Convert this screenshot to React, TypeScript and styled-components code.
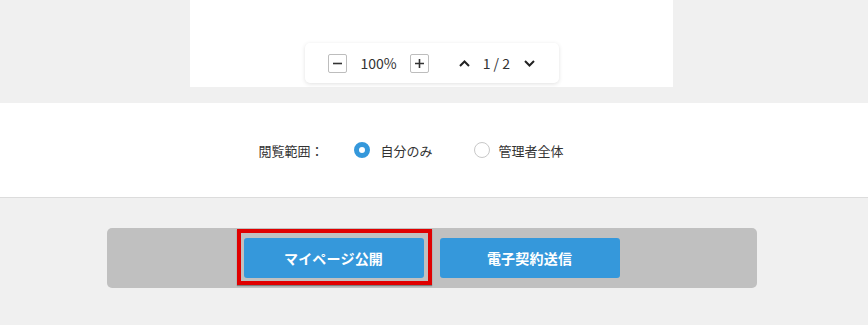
import React from "react";
import styled, { createGlobalStyle } from "styled-components";

const Global = createGlobalStyle`
  html, body { margin: 0; padding: 0; background: #f0f0f0; }
  body { font-family: "Noto Sans CJK JP", "Noto Sans", sans-serif; color: #333; }
  * { box-sizing: border-box; }
`;

const Screen = styled.div`
  padding-right: 5px;
`;

const Viewer = styled.div`
  display: flex;
  justify-content: center;
`;

const Page = styled.div`
  width: 483px;
  height: 87px;
  background: #fff;
  display: flex;
  align-items: flex-end;
  justify-content: center;
  padding-bottom: 4px;
`;

const Toolbar = styled.div`
  width: 254px;
  height: 40px;
  background: #fff;
  border-radius: 5px;
  box-shadow: 0 1px 4px rgba(0, 0, 0, 0.12);
  display: flex;
  align-items: center;
  padding: 0 24px 0 23px;
`;

const ZoomButton = styled.button`
  width: 19px;
  height: 19px;
  padding: 0;
  border: 1px solid #bdbdbd;
  border-radius: 2px;
  background: #fff;
  display: flex;
  align-items: center;
  justify-content: center;
  color: #333;
  flex: none;
`;

const ToolText = styled.span<{ $ml: number; $mr: number }>`
  font-size: 14px;
  color: #333;
  margin: 0 ${(p) => p.$mr}px 0 ${(p) => p.$ml}px;
  line-height: 19px;
  white-space: nowrap;
`;

const NavButton = styled.span<{ $ml?: number }>`
  display: flex;
  width: 11px;
  height: 19px;
  align-items: center;
  justify-content: center;
  margin-left: ${(p) => p.$ml ?? 0}px;
  flex: none;
`;

const Section = styled.div`
  margin: 16px -5px 0 0;
  height: 95px;
  background: #fff;
  border-bottom: 1px solid #dcdcdc;
  display: flex;
  align-items: center;
  justify-content: center;
  padding-right: 46px;
`;

const ScopeLabel = styled.span`
  font-size: 13px;
  color: #333;
  margin-right: 31px;
`;

const Option = styled.label<{ $gap?: number }>`
  display: flex;
  align-items: center;
  font-size: 13px;
  color: #333;
  margin-left: ${(p) => p.$gap ?? 0}px;
`;

const Radio = styled.span<{ $checked?: boolean }>`
  width: 16px;
  height: 16px;
  border-radius: 50%;
  background: #fff;
  border: ${(p) => (p.$checked ? "5px solid #3598db" : "1px solid #c8c8c8")};
  margin-right: ${(p) => (p.$checked ? 10 : 9)}px;
  flex: none;
`;

const ActionBar = styled.div`
  width: 650px;
  height: 60px;
  margin: 30px auto 0;
  background: #c0c0c0;
  border-radius: 5px;
  display: flex;
  align-items: center;
  justify-content: center;
  gap: 16px;
`;

const Highlight = styled.div`
  position: relative;
  display: flex;
`;

const HighlightFrame = styled.div`
  position: absolute;
  top: -9px;
  left: -7px;
  right: -8px;
  bottom: -7px;
  border: 4px solid #e00000;
  box-shadow: 0 1px 1px rgba(0, 0, 0, 0.35);
  pointer-events: none;
`;

const ActionButton = styled.button`
  width: 180px;
  height: 40px;
  border: none;
  border-radius: 3px;
  background: #3598db;
  color: #fff;
  font-family: "Noto Sans CJK JP", "Noto Sans", sans-serif;
  font-size: 14px;
  font-weight: 700;
  letter-spacing: 0.2px;
  padding: 0;
`;

const Minus = () => (
  <svg width="11" height="11" viewBox="0 0 11 11">
    <path d="M1 5.5h9" stroke="#333" strokeWidth="1.6" />
  </svg>
);

const Plus = () => (
  <svg width="11" height="11" viewBox="0 0 11 11">
    <path d="M1 5.5h9M5.5 1v9" stroke="#333" strokeWidth="1.6" />
  </svg>
);

const Chevron = ({ up }: { up?: boolean }) => (
  <svg width="11" height="7" viewBox="0 0 11 7">
    <path
      d={up ? "M1 6L5.5 1.5L10 6" : "M1 1L5.5 5.5L10 1"}
      fill="none"
      stroke="#222"
      strokeWidth="2"
    />
  </svg>
);

export default function App() {
  return (
    <Screen>
      <Global />
      <Viewer>
        <Page>
          <Toolbar>
            <ZoomButton aria-label="zoom out">
              <Minus />
            </ZoomButton>
            <ToolText $ml={14} $mr={13}>100%</ToolText>
            <ZoomButton aria-label="zoom in">
              <Plus />
            </ZoomButton>
            <NavButton $ml={30}>
              <Chevron up />
            </NavButton>
            <ToolText $ml={13} $mr={14}>1 / 2</ToolText>
            <NavButton>
              <Chevron />
            </NavButton>
          </Toolbar>
        </Page>
      </Viewer>
      <Section>
        <ScopeLabel>閲覧範囲：</ScopeLabel>
        <Option>
          <Radio $checked />
          自分のみ
        </Option>
        <Option $gap={41}>
          <Radio />
          管理者全体
        </Option>
      </Section>
      <ActionBar>
        <Highlight>
          <ActionButton>マイページ公開</ActionButton>
          <HighlightFrame />
        </Highlight>
        <ActionButton>電子契約送信</ActionButton>
      </ActionBar>
    </Screen>
  );
}
